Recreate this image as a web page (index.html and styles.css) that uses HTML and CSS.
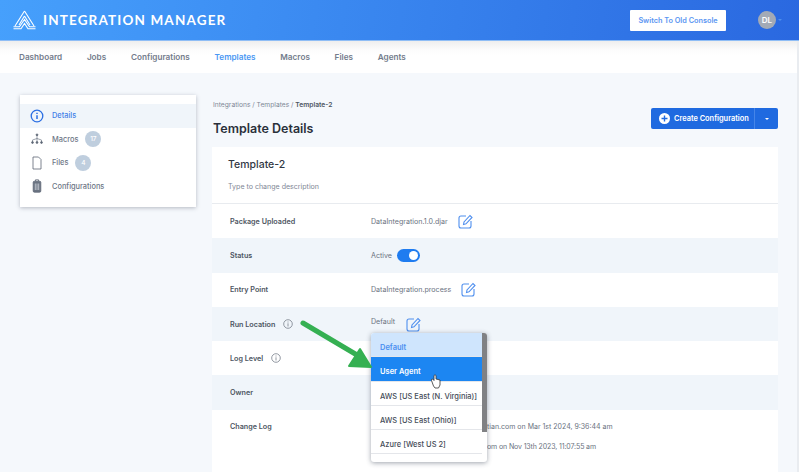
FILE: index.html
```html
<!DOCTYPE html>
<html lang="en">
<head>
    <meta charset="UTF-8">
    <meta name="viewport" content="width=device-width, initial-scale=1.0">
    <title>Integration Manager</title>
    <link rel="stylesheet" href="styles.css">
</head>
<body>
    <header class="topbar">
        <div class="brand">
            <svg class="brand-logo" width="23" height="20" viewBox="0 0 23 20" fill="none" stroke="#fff" stroke-width="1.100">
                <path d="M11.500 1 L2 16 M11.500 1 L21 16 M11.500 6 L6 15 M11.500 6 L17 15"/>
                <path d="M0.500 18.800 H8 L11.500 13.500 L15 18.800 H22.500 M0.500 16.800 H6.500 L11.500 9.500 L16.500 16.800 H22.500"/>
            </svg>
            <span class="brand-name">INTEGRATION MANAGER</span>
        </div>
        <div class="topbar-right">
            <button class="old-console">Switch To Old Console</button>
            <div class="avatar">DL</div>
            <span class="avatar-caret"></span>
        </div>
    </header>

    <nav class="mainnav">
        <a href="#">Dashboard</a>
        <a href="#">Jobs</a>
        <a href="#">Configurations</a>
        <a href="#" class="active">Templates</a>
        <a href="#">Macros</a>
        <a href="#">Files</a>
        <a href="#">Agents</a>
    </nav>

    <div class="content">
        <aside class="sidebar">
            <a href="#" class="side-item active">
                <svg width="14" height="14" viewBox="0 0 14 14" fill="none" stroke="#2b6fe3" stroke-width="1.300">
                    <circle cx="7" cy="7" r="5.800"/>
                    <path d="M7 6.200 V10 M7 3.800 V5" stroke-width="1.500"/>
                </svg>
                <span>Details</span>
            </a>
            <a href="#" class="side-item">
                <svg width="12" height="12" viewBox="0 0 12 12" fill="#5d6675" stroke="#5d6675" stroke-width="0.800">
                    <circle cx="6" cy="1.800" r="0.900"/>
                    <circle cx="1.500" cy="9.500" r="0.900"/>
                    <circle cx="6" cy="9.500" r="0.900"/>
                    <circle cx="10.500" cy="9.500" r="0.900"/>
                    <path d="M6 2 V9.500 M1.500 9.500 V7 L6 5.500 L10.500 7 V9.500" fill="none" stroke-width="0.600"/>
                </svg>
                <span>Macros</span>
                <span class="count">17</span>
            </a>
            <a href="#" class="side-item">
                <svg width="12" height="14" viewBox="0 0 12 14" fill="none" stroke="#5d6675" stroke-width="0.800">
                    <path d="M2 1 H7.500 L10 3.500 V13 H2 Z"/>
                </svg>
                <span>Files</span>
                <span class="count">4</span>
            </a>
            <a href="#" class="side-item">
                <svg width="12" height="14" viewBox="0 0 12 14" fill="#6b7482" stroke="#5d6675" stroke-width="0.800">
                    <path d="M4.500 2 V0.800 H7.500 V2" fill="none"/>
                    <rect x="2.200" y="2.200" width="7.600" height="11" rx="1.200"/>
                    <path d="M4.300 4.500 V11 M6 4.500 V11 M7.700 4.500 V11" stroke="#cfd4dc"/>
                </svg>
                <span>Configurations</span>
            </a>
        </aside>

        <main class="details">
            <div class="details-head">
                <div class="head-text">
                    <div class="crumbs">Integrations / Templates / <b>Template-2</b></div>
                    <h1>Template Details</h1>
                </div>
                <div class="create-btn">
                    <span class="create-main">
                        <svg width="11" height="11" viewBox="0 0 11 11">
                            <circle cx="5.500" cy="5.500" r="5.500" fill="#fff"/>
                            <path d="M5.500 2.500 V8.500 M2.500 5.500 H8.500" stroke="#1f6ae0" stroke-width="1.400"/>
                        </svg>
                        Create Configuration
                    </span>
                    <span class="create-caret"></span>
                </div>
            </div>

            <section class="card">
                <div class="card-title">
                    <h2>Template-2</h2>
                    <p>Type to change description</p>
                </div>

                <div class="row">
                    <div class="row-label">Package Uploaded</div>
                    <div class="row-value">DataIntegration.1.0.djar
                        <svg class="edit" width="15" height="15" viewBox="0 0 15 15" fill="none" stroke="#4f8fee" stroke-width="1.100">
                            <path d="M8 2 H3 Q1 2 1 4 V12 Q1 14 3 14 H11 Q13 14 13 12 V7"/>
                            <path d="M5.500 10.500 L6 8 L12 1.500 L14 3.500 L8 9.800 Z"/>
                        </svg>
                    </div>
                </div>
                <div class="row tint">
                    <div class="row-label">Status</div>
                    <div class="row-value">Active <span class="toggle"><span class="knob"></span></span></div>
                </div>
                <div class="row">
                    <div class="row-label">Entry Point</div>
                    <div class="row-value">DataIntegration.process
                        <svg class="edit" width="15" height="15" viewBox="0 0 15 15" fill="none" stroke="#4f8fee" stroke-width="1.100">
                            <path d="M8 2 H3 Q1 2 1 4 V12 Q1 14 3 14 H11 Q13 14 13 12 V7"/>
                            <path d="M5.500 10.500 L6 8 L12 1.500 L14 3.500 L8 9.800 Z"/>
                        </svg>
                    </div>
                </div>
                <div class="row tint">
                    <div class="row-label">Run Location
                        <svg class="hint" width="10" height="10" viewBox="0 0 10 10" fill="none" stroke="#78808c" stroke-width="0.800">
                            <circle cx="5" cy="5" r="4.300"/>
                            <path d="M5 4.300 V7.500 M5 2.500 V3.500"/>
                        </svg>
                    </div>
                    <div class="row-value">
                        <span class="raised">Default</span>
                        <svg class="edit wide" width="15" height="15" viewBox="0 0 15 15" fill="none" stroke="#4f8fee" stroke-width="1.100">
                            <path d="M8 2 H3 Q1 2 1 4 V12 Q1 14 3 14 H11 Q13 14 13 12 V7"/>
                            <path d="M5.500 10.500 L6 8 L12 1.500 L14 3.500 L8 9.800 Z"/>
                        </svg>
                    </div>
                </div>
                <div class="row">
                    <div class="row-label">Log Level
                        <svg class="hint" width="10" height="10" viewBox="0 0 10 10" fill="none" stroke="#78808c" stroke-width="0.800">
                            <circle cx="5" cy="5" r="4.300"/>
                            <path d="M5 4.300 V7.500 M5 2.500 V3.500"/>
                        </svg>
                    </div>
                </div>
                <div class="row tint">
                    <div class="row-label">Owner</div>
                </div>
                <div class="row changelog">
                    <div class="row-label">Change Log</div>
                    <div class="log-lines">
                        <div>tian.com on Mar 1st 2024, 9:36:44 am</div>
                        <div class="log-two">om on Nov 13th 2023, 11:07:55 am</div>
                    </div>
                </div>
            </section>
        </main>
    </div>

    <div class="run-menu">
        <div class="run-list">
            <div class="run-option selected">Default</div>
            <div class="run-option hover">User Agent</div>
            <div class="run-option">AWS [US East (N. Virginia)]</div>
            <div class="run-option">AWS [US East (Ohio)]</div>
            <div class="run-option">Azure [West US 2]</div>
        </div>
        <div class="run-scroll"></div>
    </div>

    <svg class="callout" width="799" height="472" viewBox="0 0 799 472">
        <path d="M303 323 L357 355" stroke="#35b052" stroke-width="5" stroke-linecap="round"/>
        <path d="M349 366 L371 367 L360 349 Z" fill="#35b052" stroke="#35b052" stroke-width="2" stroke-linejoin="round"/>
        <path d="M433.500 386 L431.500 380.500 Q431 379 432.500 379 L434 380.500 V375.500 Q435 374 436 375.500 V379 L440 380 V385 L438.500 388 H435 Z" fill="#fff" stroke="#333" stroke-width="0.800" stroke-linejoin="round"/>
    </svg>
</body>
</html>
```

FILE: styles.css
```css
* {
    box-sizing: border-box;
}

html, body {
    height: 472px;
    overflow: hidden;
}

body {
    margin: 0;
    position: relative;
    font-family: Inter, "Noto Sans", sans-serif;
    background-color: #f5f8fc;
    color: #4d5562;
    font-size: 8px;
}

/* page scrollbar edge */
body::after {
    content: "";
    position: absolute;
    top: 41px;
    right: 0;
    bottom: 0;
    width: 2px;
    background-color: #e9ecf0;
}

a {
    text-decoration: none;
    color: inherit;
}

.topbar {
    height: 41px;
    display: flex;
    justify-content: space-between;
    align-items: center;
    padding: 0 17px 0 13px;
    background: linear-gradient(100deg, #46a0fc 0%, #2a68e0 100%);
    border-bottom: 1px solid #8fbdf5;
}

.brand {
    display: flex;
    align-items: center;
    gap: 7px;
}

.brand-name {
    font-family: Lato, sans-serif;
    font-size: 13.500px;
    font-weight: 700;
    letter-spacing: 1.150px;
    color: #fff;
}

.topbar-right {
    display: flex;
    align-items: center;
}

.old-console {
    width: 96px;
    height: 21px;
    padding: 0;
    border: 0;
    border-radius: 1px;
    background-color: #fff;
    color: #5b96f2;
    font-family: Inter, sans-serif;
    font-size: 7.300px;
    font-weight: 600;
}

.avatar {
    width: 18px;
    height: 18px;
    margin-left: 32px;
    border-radius: 50%;
    background-color: #a3aab6;
    color: #fff;
    font-size: 8px;
    font-weight: 600;
    line-height: 18px;
    text-align: center;
}

.avatar-caret {
    margin-left: 2px;
    border: 2px solid transparent;
    border-top-color: #4f8fee;
    border-bottom: 0;
}

.mainnav {
    height: 32px;
    display: flex;
    align-items: center;
    gap: 24.700px;
    padding: 0 19px;
    background: linear-gradient(#eeeeee 0, #fcfcfc 9px, #fff 14px);
    font-size: 8.200px;
    font-weight: 600;
    color: #737c8c;
}

.mainnav .active {
    color: #4a97f3;
}

.content {
    display: flex;
    align-items: flex-start;
    gap: 16px;
    padding: 22px 0 0 20px;
}

.sidebar {
    width: 176px;
    height: 112px;
    flex: none;
    padding-top: 9px;
    background-color: #fff;
    box-shadow: 0 1px 4px rgba(60, 70, 90, 0.35);
    font-size: 7.400px;
    font-weight: 500;
    color: #6d7686;
}

.side-item {
    height: 23.500px;
    display: flex;
    align-items: center;
    padding-left: 10px;
}

.side-item svg {
    flex: none;
    width: 14px;
    margin-right: 8px;
}

.side-item.active {
    background-color: #f0f5fa;
    color: #3f7ee8;
}

.count {
    width: 16px;
    height: 16px;
    margin-left: 7px;
    border-radius: 50%;
    background-color: #bfcede;
    color: #fff;
    font-size: 6.500px;
    line-height: 16px;
    text-align: center;
}

.details {
    width: 566px;
    flex: none;
}

.details-head {
    height: 52px;
    display: flex;
    justify-content: space-between;
    align-items: flex-start;
}

.head-text {
    padding-left: 1px;
}

.crumbs {
    margin-top: 6px;
    font-size: 6.700px;
    color: #7f8896;
}

.crumbs b {
    font-weight: 600;
    color: #4d5562;
}

h1 {
    margin: 12px 0 0;
    font-size: 12.500px;
    font-weight: 600;
    line-height: 15px;
    color: #2a303a;
}

.create-btn {
    display: flex;
    width: 127px;
    height: 21px;
    margin-top: 13px;
    border-radius: 2px;
    background-color: #1f6ae0;
    color: #fff;
    font-size: 7.400px;
    font-weight: 600;
    white-space: nowrap;
}

.create-main {
    flex: 1;
    display: flex;
    align-items: center;
    gap: 4px;
    padding-left: 8px;
    border-right: 1px solid #4585e8;
}

.create-caret {
    width: 23px;
    position: relative;
}

.create-caret::after {
    content: "";
    position: absolute;
    left: 10px;
    top: 10px;
    border: 2px solid transparent;
    border-top-color: #fff;
    border-bottom: 0;
}

.card {
    background-color: #fff;
}

.card-title {
    height: 57px;
    padding: 11px 16px 0;
    border-bottom: 1px solid #e8ebef;
}

h2 {
    margin: 0;
    font-size: 10.500px;
    font-weight: 500;
    line-height: 13px;
    color: #303743;
}

.card-title p {
    margin: 11px 0 0;
    font-size: 7.050px;
    line-height: 10px;
    color: #7f8896;
}

.row {
    height: 34.300px;
    display: flex;
    align-items: center;
}

.row.tint {
    background-color: #f0f5fa;
}

.row-label {
    width: 159px;
    display: flex;
    align-items: center;
    padding-left: 18px;
    font-size: 7.200px;
    font-weight: 600;
    color: #4d5562;
}

.row-value {
    display: flex;
    align-items: center;
    font-size: 7.100px;
    color: #6a7280;
}

.raised {
    margin-bottom: 5px;
}

.edit {
    margin-left: 10px;
}

.edit.wide {
    margin-left: 11px;
}

.hint {
    margin-left: 8px;
}

.toggle {
    width: 23px;
    height: 13px;
    margin-left: 5px;
    padding: 2px;
    display: flex;
    justify-content: flex-end;
    border-radius: 7px;
    background-color: #1f7cf0;
}

.knob {
    width: 9px;
    height: 9px;
    border-radius: 50%;
    background-color: #fff;
}

.row.changelog {
    height: 62px;
    align-items: flex-start;
    padding-top: 12px;
}

.log-lines {
    padding-left: 116px;
    font-size: 7px;
    color: #6a7280;
}

.log-two {
    margin-top: 11px;
    letter-spacing: -0.120px;
}

/* dropdown opened over the Run Location row */
.run-menu {
    position: absolute;
    left: 371px;
    top: 333px;
    width: 116px;
    height: 129px;
    overflow: hidden;
    border-radius: 3px;
    background-color: #fff;
    box-shadow: 0 1px 5px rgba(40, 50, 70, 0.45);
}

.run-list {
    width: 111px;
}

.run-option {
    height: 24.300px;
    padding: 3px 0 0 9px;
    border-bottom: 1px solid #e4e6ea;
    font-size: 7.500px;
    font-weight: 500;
    line-height: 24px;
    white-space: nowrap;
    color: #454c58;
}

.run-option.selected {
    background-color: #cfe5fd;
    color: #4a8ff0;
    font-weight: 600;
}

.run-option.hover {
    background-color: #1c86f2;
    color: #fff;
    font-weight: 600;
}

.run-scroll {
    position: absolute;
    top: 0;
    right: 0;
    width: 5px;
    height: 99px;
    background-color: #808184;
}

.callout {
    position: absolute;
    left: 0;
    top: 0;
    pointer-events: none;
}
```
